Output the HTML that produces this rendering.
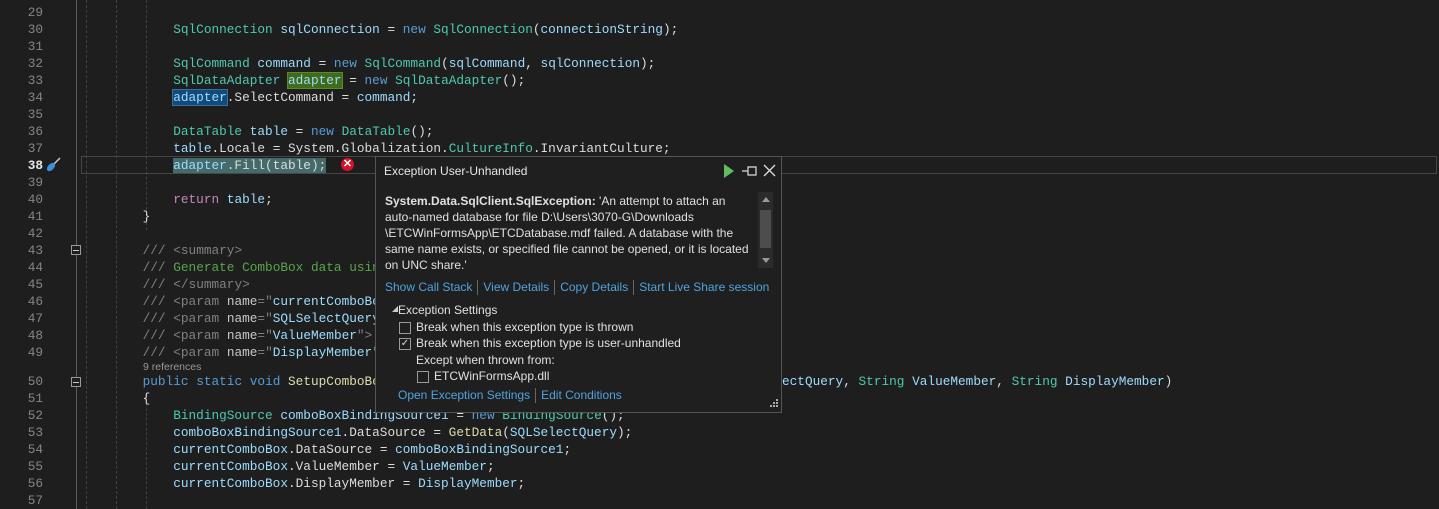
<!DOCTYPE html>
<html><head><meta charset="utf-8"><style>
html,body{margin:0;padding:0;background:#1e1e1e;width:1439px;height:509px;overflow:hidden;position:relative}
.ln{position:absolute;left:0;width:43px;text-align:right;font:12.75px "Liberation Mono",monospace;color:#858585;line-height:17px}
.c{position:absolute;left:112px;font:12.75px "Liberation Mono",monospace;color:#dcdcdc;line-height:17px;white-space:pre}
.t{color:#4ec9b0}.v{color:#9cdcfe}.k{color:#569cd6}.m{color:#dcdcaa}.g{color:#57a64a}.p{color:#c586c0}.x{color:#808080}
.guide{position:absolute;top:0;height:509px;border-left:1px dashed #404040}
.pop{position:absolute;left:375px;top:156px;width:405px;height:255px;background:#1f1f1f;border:1px solid #555;font:12px "Liberation Sans",sans-serif;color:#e0e0e0}
.pop div{position:absolute;white-space:nowrap}
.a{color:#4fa3e0}
.sep{display:inline-block;width:1px;height:15px;background:#666;vertical-align:middle;margin:0 5px}
.cb{width:10px;height:10px;border:1px solid #9a9a9a;background:#1f1f1f}
</style></head><body>
<div style="position:absolute;left:76px;top:0;width:1px;height:509px;background:#5a5a5a"></div>
<div class="guide" style="left:86px"></div>
<div class="guide" style="left:116px"></div>
<div class="guide" style="left:146px;height:230px"></div>
<div class="guide" style="left:146px;top:398px;height:111px"></div>
<div style="position:absolute;left:81px;top:156px;width:1354px;height:16px;border:1px solid #464646"></div>
<div style="position:absolute;left:71px;top:245px;width:8px;height:8px;border:1px solid #999;background:#1e1e1e"><div style="position:absolute;left:1px;top:3.5px;width:6px;height:1px;background:#ccc"></div></div>
<div style="position:absolute;left:71px;top:377px;width:8px;height:8px;border:1px solid #999;background:#1e1e1e"><div style="position:absolute;left:1px;top:3.5px;width:6px;height:1px;background:#ccc"></div></div>

<div class="ln" style="top:4px">29</div>
<div class="ln" style="top:21px">30</div>
<div class="ln" style="top:38px">31</div>
<div class="ln" style="top:55px">32</div>
<div class="ln" style="top:72px">33</div>
<div class="ln" style="top:89px">34</div>
<div class="ln" style="top:106px">35</div>
<div class="ln" style="top:123px">36</div>
<div class="ln" style="top:140px">37</div>
<div class="ln" style="top:157px;color:#e6e6e6;font-weight:bold">38</div>
<div class="ln" style="top:174px">39</div>
<div class="ln" style="top:191px">40</div>
<div class="ln" style="top:208px">41</div>
<div class="ln" style="top:225px">42</div>
<div class="ln" style="top:242px">43</div>
<div class="ln" style="top:259px">44</div>
<div class="ln" style="top:276px">45</div>
<div class="ln" style="top:293px">46</div>
<div class="ln" style="top:310px">47</div>
<div class="ln" style="top:327px">48</div>
<div class="ln" style="top:344px">49</div>
<div class="ln" style="top:373px">50</div>
<div class="ln" style="top:390px">51</div>
<div class="ln" style="top:407px">52</div>
<div class="ln" style="top:424px">53</div>
<div class="ln" style="top:441px">54</div>
<div class="ln" style="top:458px">55</div>
<div class="ln" style="top:475px">56</div>
<div class="ln" style="top:492px">57</div>
<svg style="position:absolute;left:44px;top:157px" width="18" height="16" viewBox="0 0 18 16"><path d="M10 7 L16 1" stroke="#ccc" stroke-width="1.5"/><ellipse cx="7" cy="10" rx="3" ry="5" transform="rotate(45 7 10)" fill="#3b8fdc"/></svg>

<div class="c" style="top:21px">        <span class="t">SqlConnection</span> <span class="v">sqlConnection</span> = <span class="k">new</span> <span class="t">SqlConnection</span>(<span class="v">connectionString</span>);</div>
<div class="c" style="top:55px">        <span class="t">SqlCommand</span> <span class="v">command</span> = <span class="k">new</span> <span class="t">SqlCommand</span>(<span class="v">sqlCommand</span>, <span class="v">sqlConnection</span>);</div>
<div class="c" style="top:72px">        <span class="t">SqlDataAdapter</span> <span class="v" style="background:#3f6b1a;outline:1px solid #5a8a2a">adapter</span> = <span class="k">new</span> <span class="t">SqlDataAdapter</span>();</div>
<div class="c" style="top:89px">        <span class="v" style="background:#124a7a;outline:1px solid #3a6e9e">adapter</span>.SelectCommand = <span class="v">command</span>;</div>
<div class="c" style="top:123px">        <span class="t">DataTable</span> <span class="v">table</span> = <span class="k">new</span> <span class="t">DataTable</span>();</div>
<div class="c" style="top:140px">        <span class="v">table</span>.Locale = System.Globalization.<span class="t">CultureInfo</span>.InvariantCulture;</div>
<div class="c" style="top:157px">        <span style="background:#456a6a"><span class="v">adapter</span>.Fill(table);</span></div>
<div style="position:absolute;left:341px;top:158px;width:13px;height:13px;border-radius:50%;background:#d8102a;color:#fff;font:bold 11px 'Liberation Sans',sans-serif;text-align:center;line-height:13px">✕</div>
<div class="c" style="top:191px">        <span class="p">return</span> <span class="v">table</span>;</div>
<div class="c" style="top:208px">    }</div>
<div class="c" style="top:242px">    <span class="x">///</span> <span class="x">&lt;summary&gt;</span></div>
<div class="c" style="top:259px">    <span class="x">///</span> <span class="g">Generate ComboBox data using</span></div>
<div class="c" style="top:276px">    <span class="x">///</span> <span class="x">&lt;/summary&gt;</span></div>
<div class="c" style="top:293px">    <span class="x">///</span> <span class="x">&lt;param</span> <span style="color:#c8c8c8">name</span><span class="x">="</span><span class="v">currentComboBox</span></div>
<div class="c" style="top:310px">    <span class="x">///</span> <span class="x">&lt;param</span> <span style="color:#c8c8c8">name</span><span class="x">="</span><span class="v">SQLSelectQuery</span></div>
<div class="c" style="top:327px">    <span class="x">///</span> <span class="x">&lt;param</span> <span style="color:#c8c8c8">name</span><span class="x">="</span><span class="v">ValueMember</span><span class="x">"&gt;</span></div>
<div class="c" style="top:344px">    <span class="x">///</span> <span class="x">&lt;param</span> <span style="color:#c8c8c8">name</span><span class="x">="</span><span class="v">DisplayMember</span><span class="x">"</span></div>
<div style="position:absolute;left:143px;top:361px;font:10.5px 'Liberation Sans',sans-serif;color:#999">9 references</div>
<div class="c" style="top:373px">    <span class="k">public</span> <span class="k">static</span> <span class="k">void</span> <span class="m">SetupComboBox</span>(</div>
<div class="c" style="top:373px;left:782px"><span class="v">ectQuery</span>, <span class="t">String</span> <span class="v">ValueMember</span>, <span class="t">String</span> <span class="v">DisplayMember</span>)</div>
<div class="c" style="top:390px">    {</div>
<div class="c" style="top:407px">        <span class="t">BindingSource</span> <span class="v">comboBoxBindingSource1</span> = <span class="k">new</span> <span class="t">BindingSource</span>();</div>
<div class="c" style="top:424px">        <span class="v">comboBoxBindingSource1</span>.DataSource = <span class="m">GetData</span>(<span class="v">SQLSelectQuery</span>);</div>
<div class="c" style="top:441px">        <span class="v">currentComboBox</span>.DataSource = <span class="v">comboBoxBindingSource1</span>;</div>
<div class="c" style="top:458px">        <span class="v">currentComboBox</span>.ValueMember = <span class="v">ValueMember</span>;</div>
<div class="c" style="top:475px">        <span class="v">currentComboBox</span>.DisplayMember = <span class="v">DisplayMember</span>;</div>

<div class="pop">
<div style="left:8px;top:7px;color:#e6e6e6">Exception User-Unhandled</div>
<svg style="position:absolute;left:347px;top:6px" width="60" height="16"><path d="M1 1 L11 8 L1 15Z" fill="#5fbf5f"/><path d="M19 8 H25 M25 4 H33 V12 H25Z" stroke="#ddd" fill="none" stroke-width="1.2"/><path d="M41 2 L52 13 M52 2 L41 13" stroke="#ddd" stroke-width="1.3"/></svg>
<div style="left:9px;top:36px;line-height:16px;white-space:normal;width:370px;height:76px;overflow:hidden"><b>System.Data.SqlClient.SqlException:</b> 'An attempt to attach an auto-named database for file D:\Users\3070-G\Downloads \ETCWinFormsApp\ETCDatabase.mdf failed. A database with the same name exists, or specified file cannot be opened, or it is located on UNC share.'</div>
<div style="left:382px;top:35px;width:15px;height:76px;background:#2b2b2b"></div>
<div style="left:386px;top:40px;width:0;height:0;border:4px solid transparent;border-bottom:5px solid #999;border-top:0"></div>
<div style="left:384px;top:53px;width:11px;height:38px;background:#4d4d4d"></div>
<div style="left:386px;top:101px;width:0;height:0;border:4px solid transparent;border-top:5px solid #999;border-bottom:0"></div>
<div style="left:9px;top:123px" class="a">Show Call Stack<span class="sep"></span>View Details<span class="sep"></span>Copy Details<span class="sep"></span>Start Live Share session</div>
<div style="left:16px;top:149px;width:0;height:0;border-left:6px solid transparent;border-bottom:6px solid #ccc"></div>
<div style="left:22px;top:146px">Exception Settings</div>
<div class="cb" style="left:23px;top:165px"></div>
<div style="left:40px;top:163px">Break when this exception type is thrown</div>
<div class="cb" style="left:23px;top:181px;font-size:10px;line-height:10px;text-align:center;color:#ddd">✓</div>
<div style="left:40px;top:179px">Break when this exception type is user-unhandled</div>
<div style="left:40px;top:196px">Except when thrown from:</div>
<div class="cb" style="left:41px;top:214px"></div>
<div style="left:58px;top:212px">ETCWinFormsApp.dll</div>
<div style="left:22px;top:231px" class="a">Open Exception Settings<span class="sep"></span>Edit Conditions</div>
<svg style="position:absolute;left:392px;top:242px" width="11" height="11"><g fill="#aaa"><rect x="8" y="0" width="2" height="2"/><rect x="5" y="3" width="2" height="2"/><rect x="8" y="3" width="2" height="2"/><rect x="2" y="6" width="2" height="2"/><rect x="5" y="6" width="2" height="2"/><rect x="8" y="6" width="2" height="2"/></g></svg>
</div>
</body></html>
